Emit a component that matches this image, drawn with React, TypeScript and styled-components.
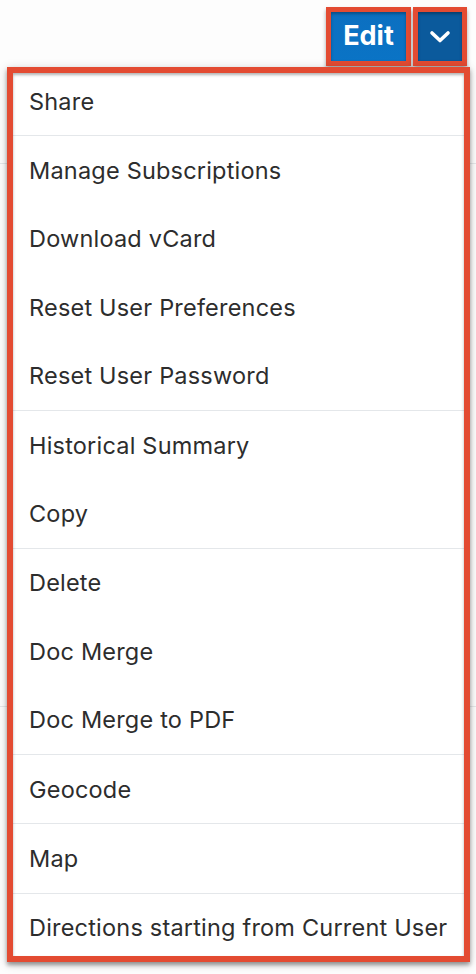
import React from "react";
import styled, { createGlobalStyle } from "styled-components";

const GlobalStyle = createGlobalStyle`
  html, body {
    margin: 0;
    padding: 0;
    background: #ffffff;
  }
  body {
    font-family: Inter, "Noto Sans", Arial, sans-serif;
    -webkit-font-smoothing: antialiased;
  }
`;

const Page = styled.div`
  position: relative;
  width: 476px;
  height: 974px;
  overflow: hidden;
  background: #fdfdfd;
`;

const Header = styled.div`
  display: flex;
  justify-content: flex-end;
  align-items: flex-start;
  gap: 2px;
  padding: 7px 9px 0 0;
  height: 60px;
  box-sizing: border-box;
`;

const Backdrop = styled.div`
  display: flex;
  flex-direction: column;
`;

const BackRow = styled.div<{ $h: number }>`
  height: ${(p) => p.$h}px;
  border-bottom: 1px solid #e6e8ea;
`;

// red annotation box drawn over a part of the screenshot
const Marked = styled.div`
  position: relative;
  display: flex;
  &::after {
    content: "";
    position: absolute;
    inset: 0;
    border: 5px solid #e34b32;
    box-shadow: 0 3px 4px rgba(0, 0, 0, 0.35), inset 0 2px 3px rgba(0, 0, 0, 0.3);
    pointer-events: none;
  }
`;

const EditButton = styled.button`
  width: 85px;
  height: 59px;
  border: none;
  margin: 0;
  padding: 0 0 2px;
  background: linear-gradient(180deg, #0c6fc0 0%, #0a74c6 100%);
  color: #ffffff;
  font-family: Inter, Arial, sans-serif;
  font-weight: 700;
  font-size: 27px;
  cursor: pointer;
`;

const CaretButton = styled.button`
  width: 54px;
  height: 59px;
  border: none;
  margin: 0;
  padding: 0;
  display: flex;
  align-items: center;
  justify-content: center;
  background: #0b5a9c;
  cursor: pointer;
`;

const Dropdown = styled(Marked)`
  position: absolute;
  top: 67px;
  left: 7px;
  width: 463px;
  flex-direction: column;
  background: #ffffff;
  box-shadow: 0 2px 10px rgba(0, 0, 0, 0.18);
  &::after {
    border-width: 6px;
  }
`;

const Group = styled.div`
  border-bottom: 1px solid #e4e7ea;
  &:last-child {
    border-bottom: none;
  }
`;

const Item = styled.div`
  height: 68.4px;
  display: flex;
  align-items: center;
  padding-left: 22px;
  font-size: 23.5px;
  letter-spacing: 0.2px;
  color: #2d2d2d;
  white-space: nowrap;
`;

const groups: string[][] = [
  ["Share"],
  ["Manage Subscriptions", "Download vCard", "Reset User Preferences", "Reset User Password"],
  ["Historical Summary", "Copy"],
  ["Delete", "Doc Merge", "Doc Merge to PDF"],
  ["Geocode"],
  ["Map"],
  ["Directions starting from Current User"],
];

export default function App() {
  return (
    <Page>
      <GlobalStyle />
      <Header>
        <Marked>
          <EditButton>Edit</EditButton>
        </Marked>
        <Marked>
          <CaretButton>
            <svg width="22" height="14" viewBox="0 0 22 14" fill="none">
              <polyline
                points="3,3 11,10.5 19,3"
                stroke="#ffffff"
                strokeWidth="3.6"
                strokeLinecap="round"
                strokeLinejoin="round"
              />
            </svg>
          </CaretButton>
        </Marked>
      </Header>
      <Backdrop>
        <BackRow $h={103} />
        <BackRow $h={542} />
      </Backdrop>
      <Dropdown>
        {groups.map((g, i) => (
          <Group key={i}>
            {g.map((label) => (
              <Item key={label}>{label}</Item>
            ))}
          </Group>
        ))}
      </Dropdown>
    </Page>
  );
}
